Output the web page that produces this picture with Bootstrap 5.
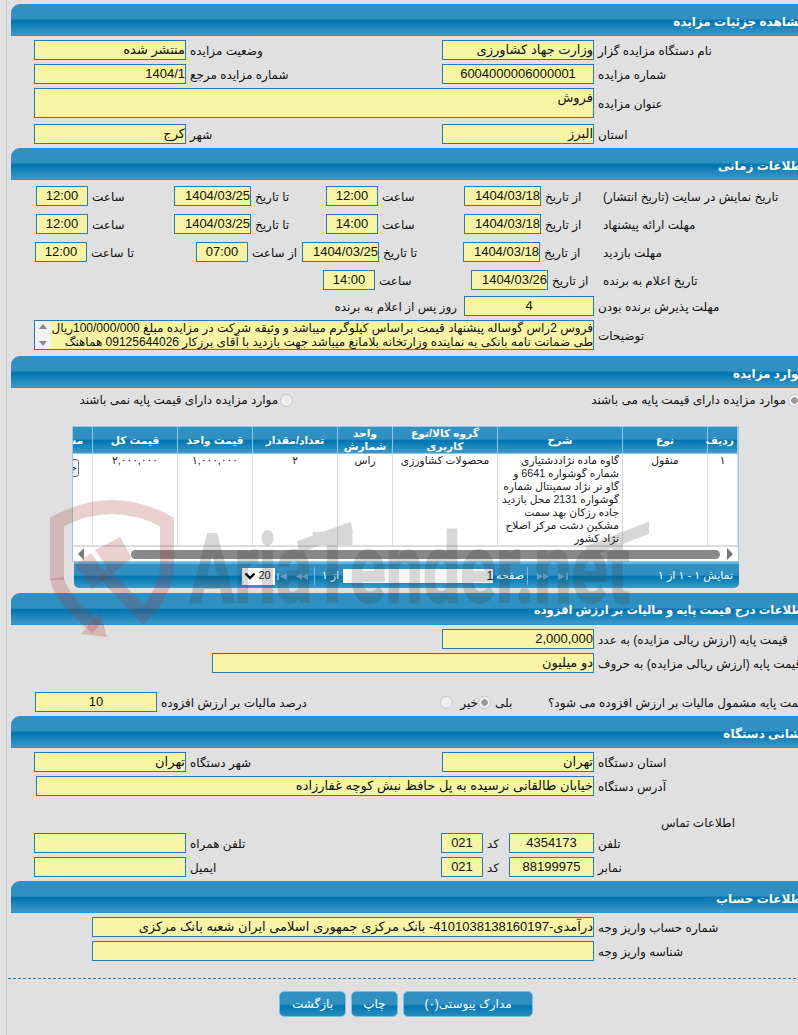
<!DOCTYPE html>
<html lang="fa" dir="rtl">
<head>
<meta charset="utf-8">
<title>مشاهده جزئیات مزایده</title>
<link href="https://cdn.jsdelivr.net/npm/bootstrap@5.3.0/dist/css/bootstrap.min.css" rel="stylesheet">
<style>
html,body{background:#e0e0e0;height:1035px;overflow:hidden}
body{font-family:"Liberation Sans","DejaVu Sans",sans-serif;font-size:12px;line-height:1.2;color:#111;position:relative;width:798px}
.stripe{direction:ltr;border-left:1px solid #cfcfcf;margin-left:6px;height:1035px;padding-left:4px;padding-top:4px}
.sheet{width:800px;direction:rtl}
.shead{height:32px;border-top:1px solid #2a93d5;border-bottom:1px solid #2a93d5;border-top-left-radius:9px;background:linear-gradient(#2f90c1 0,#2f90c1 47%,#0277b2 50%,#0277b2 55%,#3f99c9 100%);color:#fff;font-weight:700;font-size:12px;padding:10px 5px 0 0;white-space:nowrap}
.shlong{font-size:11.5px}
.sbody{display:flex;flex-direction:column;gap:4px}
.pt4{padding-top:4px}.pb4{padding-bottom:4px}
.pt6{padding-top:6px}.pb6{padding-bottom:6px}
.rw{display:flex;align-items:center;height:20px;flex:none}
.rwtall{height:30px}
.cap{flex:none;text-align:left;padding-left:4px;padding-top:3px;white-space:nowrap}
.fld{flex:none;height:20px;background:#f7f4a5;border:1px solid #2a7ab0;line-height:18px;white-space:nowrap;overflow:hidden;text-align:right;font-size:13px}
.fldc{text-align:center}
.fldtall{height:30px}
.mt2{margin-top:2px}
.mt4b{margin-top:4px}
.mt5x{margin-top:5px}
.mt15{margin-top:15px}
.c217{width:217px}.c212{width:212px}.c58{width:58px}.c59{width:59px}.c86{width:86px}.c75{width:75px}.c84{width:84px}.c54{width:54px}.c109{width:109px}.c51{width:51px}.c96{width:96px}.c256{width:256px}.c255{width:255px}.c267{width:267px}.c53{width:53px}.c19{width:19px;padding-left:2px}.c283{width:283px}.c26{width:26px}
.f152{width:152px}.f77{width:77px}.f52{width:52px}.f130{width:130px}.f122{width:122px}.f560{width:560px}.f558{width:558px}.f382{width:382px}.f85{width:85px}.f42{width:42px}.f502{width:502px}
.after{margin-right:7px;padding-top:3px;white-space:nowrap}
.notes{flex:none;width:560px;height:30px;border:1px solid #2a7ab0;background:#f7f4a5;display:flex;overflow:hidden}
.notetext{flex:1;overflow:hidden;white-space:nowrap;font-size:12px;line-height:14px;text-align:right}
.notebar{flex:none;width:16px;background:#f1f1f1;display:flex;flex-direction:column;justify-content:space-between;align-items:center;padding:3px 0}
.uparr{border:4px solid transparent;border-top:0;border-bottom:5px solid #888;width:0;height:0}
.dnarr{border:4px solid transparent;border-bottom:0;border-top:5px solid #888;width:0;height:0}
.rad{appearance:none;flex:none;width:13px;height:13px;border-radius:50%;border:1px solid #c8c8c8;background:#eee;margin:0}
.radon{background:radial-gradient(circle,#9a9a9a 0 3px,#eee 3.5px)}
.radrow{display:flex;align-items:center;height:20px;gap:2px;white-space:nowrap;margin-top:2px}
.rr1{margin-right:10px}
.radsp{margin-right:296px}
.mr6{margin-right:6px}
.gbox{width:667px;margin-right:72px;border:1px solid #9cc9e8;background:#fff;overflow:hidden;margin-top:16px}
.gtbl{table-layout:fixed;width:705px;margin:0;border-collapse:collapse;font-size:10.7px;--bs-table-bg:transparent}
.gtbl th{background:linear-gradient(#2f90c1 0,#2f90c1 47%,#0277b2 50%,#0277b2 55%,#3f99c9 100%);color:#fff;font-weight:700;font-size:10.7px;line-height:13px;text-align:center;padding:0 3px;height:26px;border:1px solid #8cc8ea;border-top:0;vertical-align:middle}
.gtbl td{padding:0 3px;border:1px solid #dcdcdc;border-top:0;text-align:center;vertical-align:top;line-height:13px;height:91px;color:#222;background:#fff}
.gtbl td.dsc{text-align:right;white-space:nowrap;overflow:hidden}
.cw30{width:30px}.cw85{width:85px}.cw125{width:125px}.cw105{width:105px}.cw55{width:55px}.cw75{width:75px}.cw60{width:60px}
.vbtn{display:block;width:34px;height:18px;margin:5px 10px 0 0;padding:0;font-size:10px;line-height:16px;border:1px solid #777;border-radius:3px;background:#f4f4f4;color:#222;text-align:center}
.sbar{height:15px;background:#fff;display:flex;direction:ltr;align-items:center;border-top:1px solid #dcdcdc;padding:0 0 0 5px}
.sleft{flex:none;border:6px solid transparent;border-left:0;border-right:6px solid #777}
.sthumb{flex:none;width:589px;height:9px;background:#888;border-radius:5px;margin-left:47px}
.sright{flex:none;border:6px solid transparent;border-right:0;border-left:6px solid #777;margin-left:7px}
.pgr{width:665px;margin-right:72px;height:26px;border-top:2px solid #5db8e4;border-bottom-left-radius:5px;border-bottom-right-radius:5px;background:linear-gradient(#2f90c1 0,#2f90c1 47%,#0277b2 50%,#0277b2 55%,#3f99c9 100%);color:#fff;font-size:11px;display:flex;align-items:center;padding-right:6px;white-space:nowrap}
.pinfo{flex:none;width:165px}
.picons{flex:none;width:32px;height:9px}
.psep{flex:none;width:1px;height:18px;background:#7fb8d8}
.ptxt{flex:none}
.pinput{flex:none;width:150px;height:14px;background:#fff;color:#111;line-height:14px;font-size:12px;text-align:right;margin:0 3px 0 4px}
.psel{flex:none;width:33px;height:17px;background:#fff;color:#111;direction:ltr;display:flex;align-items:center;justify-content:space-between;padding:0 4px 0 2px;font-size:11px}
.mr2{margin-right:2px}.mr3{margin-right:3px}.mr8{margin-right:8px}.mr7{margin-right:7px}.mr5{margin-right:5px}
.contact{height:20px;flex:none;margin-top:13px;margin-bottom:-4px;padding-right:76px;line-height:20px;white-space:nowrap}
.dashy{border-top:1px dashed #2a7ab0;margin-left:-3px;margin-top:17px}
.btnrow{display:flex;gap:5px;padding-right:278px;margin-top:12px}
.sbtn{flex:none;height:26px;padding:0;color:#fff;font-size:12px;line-height:24px;border:1px solid #6fc4ea;border-radius:5px;background:linear-gradient(#2f90c1 0,#2f90c1 50%,#0277b2 60%,#2a8cbf 100%)}
.b130{width:130px}.b47{width:47px}.b67{width:67px}
.wmark{position:absolute;left:0;top:0;pointer-events:none;z-index:5;direction:ltr}
</style>
</head>
<body>
<div class="stripe">
<div class="sheet">

<div class="shead">مشاهده جزئیات مزایده</div>
<div class="sbody pt4 pb4">
  <div class="rw"><div class="cap c217">نام دستگاه مزایده گزار</div><div class="fld f152">وزارت جهاد کشاورزی</div><div class="cap c256">وضعیت مزایده</div><div class="fld f152">منتشر شده</div></div>
  <div class="rw"><div class="cap c217">شماره مزایده</div><div class="fld f152 fldc">6004000006000001</div><div class="cap c256">شماره مزایده مرجع</div><div class="fld f152">1404/1</div></div>
  <div class="rw rwtall"><div class="cap c217">عنوان مزایده</div><div class="fld fldtall f560">فروش</div></div>
  <div class="rw mt2"><div class="cap c217">استان</div><div class="fld f152">البرز</div><div class="cap c256">شهر</div><div class="fld f152">کرج</div></div>
</div>

<div class="shead">اطلاعات زمانی</div>
<div class="sbody pt6 pb6">
  <div class="rw"><div class="cap c212">تاریخ نمایش در سایت (تاریخ انتشار)</div><div class="cap c58">از تاریخ</div><div class="fld f77">1404/03/18</div><div class="cap c86">ساعت</div><div class="fld f52 fldc">12:00</div><div class="cap c75">تا تاریخ</div><div class="fld f77">1404/03/25</div><div class="cap c86">ساعت</div><div class="fld f52 fldc">12:00</div></div>
  <div class="rw mt4b"><div class="cap c212">مهلت ارائه پیشنهاد</div><div class="cap c58">از تاریخ</div><div class="fld f77">1404/03/18</div><div class="cap c86">ساعت</div><div class="fld f52 fldc">14:00</div><div class="cap c75">تا تاریخ</div><div class="fld f77">1404/03/25</div><div class="cap c86">ساعت</div><div class="fld f52 fldc">12:00</div></div>
  <div class="rw mt4b"><div class="cap c212">مهلت بازدید</div><div class="cap c59">از تاریخ</div><div class="fld f77">1404/03/18</div><div class="cap c84">تا تاریخ</div><div class="fld f77">1404/03/25</div><div class="cap c54">از ساعت</div><div class="fld f52 fldc">07:00</div><div class="cap c109">تا ساعت</div><div class="fld f52 fldc">12:00</div></div>
  <div class="rw mt4b"><div class="cap c212">تاریخ اعلام به برنده</div><div class="cap c51">از تاریخ</div><div class="fld f77">1404/03/26</div><div class="cap c96">ساعت</div><div class="fld f52 fldc">14:00</div></div>
  <div class="rw mt2"><div class="cap c217">مهلت پذیرش برنده بودن</div><div class="fld f130 fldc">4</div><div class="after">روز پس از اعلام به برنده</div></div>
  <div class="rw rwtall"><div class="cap c217">توضیحات</div><div class="notes"><div class="notetext">فروس 2راس گوساله پیشنهاد قیمت براساس کیلوگرم میباشد و وثیقه شرکت در مزایده مبلغ 100/000/000ریال<br>طی ضمانت نامه بانکی به نماینده وزارتخانه بلامانع میباشد جهت بازدید با آقای برزکار 09125644026 هماهنگ</div><div class="notebar"><span class="uparr"></span><span class="dnarr"></span></div></div></div>
</div>

<div class="shead">موارد مزایده</div>
<div class="radrow">
  <input type="radio" class="rad radon rr1" disabled aria-label="پایه"><span>موارد مزایده دارای قیمت پایه می باشند</span>
  <input type="radio" class="rad radsp" disabled aria-label="بدون پایه"><span>موارد مزایده دارای قیمت پایه نمی باشند</span>
</div>
<div class="gbox">
  <table class="gtbl">
    <colgroup><col class="cw30"><col class="cw85"><col class="cw125"><col class="cw105"><col class="cw55"><col class="cw85"><col class="cw75"><col class="cw85"><col class="cw60"></colgroup>
    <thead><tr><th>ردیف</th><th>نوع</th><th>شرح</th><th>گروه کالا/نوع کاربری</th><th>واحد شمارش</th><th>تعداد/مقدار</th><th>قیمت واحد</th><th>قیمت کل</th><th>مشاهده</th></tr></thead>
    <tbody><tr><td>۱</td><td>منقول</td><td class="dsc">گاوه ماده نژاددشتیاری<br>شماره گوشواره 6641 و<br>گاو نر نژاد سمینتال شماره<br>گوشواره 2131 محل بازدید<br>جاده رزکان بهد سمت<br>مشکین دشت مرکز اصلاح<br>نژاد کشور</td><td>محصولات کشاورزی</td><td>راس</td><td>۲</td><td>۱,۰۰۰,۰۰۰</td><td>۲,۰۰۰,۰۰۰</td><td><button type="button" class="vbtn">جزئیات</button></td></tr></tbody>
  </table>
  <div class="sbar"><span class="sleft"></span><span class="sthumb"></span><span class="sright"></span></div>
</div>
<div class="pgr">
  <span class="pinfo">نمایش ۱ - ۱ از ۱</span>
  <svg class="picons" viewBox="0 0 32 9" aria-hidden="true"><path fill="#6db4da" d="M0 1h2v7H0zM3 4.500 10 1v7zM19 4.500 25 1v7zM25 4.500 31 1v7z" transform="matrix(-1 0 0 1 32 0)"/></svg>
  <span class="psep mr8"></span>
  <span class="ptxt mr3">صفحه</span>
  <span class="pinput">1</span>
  <span class="ptxt">از ۱</span>
  <span class="psep mr7"></span>
  <svg class="picons mr5" viewBox="0 0 32 9" aria-hidden="true"><path fill="#6db4da" d="M0 1h2v7H0zM3 4.500 10 1v7zM19 4.500 25 1v7zM25 4.500 31 1v7z"/></svg>
  <div class="psel mr2"><svg width="12" height="8" viewBox="0 0 12 8" aria-hidden="true"><path d="M1.500 1.500 6 6l4.500-4.500" fill="none" stroke="#000" stroke-width="2.400"/></svg><span>20</span></div>
</div>

<div class="shead shlong mt5x">اطلاعات درج قیمت پایه و مالیات بر ارزش افزوده</div>
<div class="sbody pt4 pb4">
  <div class="rw"><div class="cap c217">قیمت پایه (ارزش ریالی مزایده) به عدد</div><div class="fld f152">2,000,000</div></div>
  <div class="rw"><div class="cap c217">قیمت پایه (ارزش ریالی مزایده) به حروف</div><div class="fld f382">دو میلیون</div></div>
  <div class="rw mt15"><div class="cap c267">قیمت پایه مشمول مالیات بر ارزش افزوده می شود؟</div><div class="cap c53">بلی</div><input type="radio" class="rad radon" disabled aria-label="بلی"><div class="cap c19">خیر</div><input type="radio" class="rad mr6" disabled aria-label="خیر"><div class="cap c283">درصد مالیات بر ارزش افزوده</div><div class="fld f122 fldc">10</div></div>
</div>

<div class="shead">نشانی دستگاه</div>
<div class="sbody pt4 pb4">
  <div class="rw"><div class="cap c217">استان دستگاه</div><div class="fld f152">تهران</div><div class="cap c256">شهر دستگاه</div><div class="fld f152">تهران</div></div>
  <div class="rw"><div class="cap c217">آدرس دستگاه</div><div class="fld f558">خیابان طالقانی نرسیده به پل حافظ نبش کوچه غفارزاده</div></div>
  <div class="contact">اطلاعات تماس</div>
  <div class="rw"><div class="cap c217">تلفن</div><div class="fld f85 fldc">4354173</div><div class="cap c26">کد</div><div class="fld f42 fldc">021</div><div class="cap c255">تلفن همراه</div><div class="fld f152"></div></div>
  <div class="rw"><div class="cap c217">نمابر</div><div class="fld f85 fldc">88199975</div><div class="cap c26">کد</div><div class="fld f42 fldc">021</div><div class="cap c255">ایمیل</div><div class="fld f152"></div></div>
</div>

<div class="shead">اطلاعات حساب</div>
<div class="sbody pt4">
  <div class="rw"><div class="cap c217">شماره حساب واریز وجه</div><div class="fld f502">درآمدی-4101038138160197- بانک مرکزی جمهوری اسلامی ایران شعبه بانک مرکزی</div></div>
  <div class="rw"><div class="cap c217">شناسه واریز وجه</div><div class="fld f502"></div></div>
</div>
<div class="dashy"></div>
<div class="btnrow">
  <button type="button" class="btn sbtn b130">مدارک پیوستی(۰)</button>
  <button type="button" class="btn sbtn b47">چاپ</button>
  <button type="button" class="btn sbtn b67">بازگشت</button>
</div>

</div>
</div>

<svg class="wmark" width="798" height="1035" viewBox="0 0 798 1035" aria-hidden="true">
  <g fill="none" stroke="#a83232" stroke-opacity=".23" stroke-width="14">
    <path d="M57 580V522Q112 492 167 522V570Q163 595 143 615L103 572"/>
    <path d="M57 578Q60 598 97 628"/>
  </g>
  <path fill="#a83232" fill-opacity=".23" d="M107 637 81 634 100 612zM75 565 92 589 108 577 91 553zM95 550 112 574 132 558 120 537z"/>
  <g fill="#3c3c3c" stroke="#3c3c3c" stroke-width="2" opacity=".2">
    <text x="190" y="602" font-family="Roboto,sans-serif" font-weight="700" font-size="96" textLength="440" lengthAdjust="spacingAndGlyphs">AriaTender.net</text>
    <path d="M298 542 350 523 352 532 300 552zM587 547 648 523 648 533 589 556z"/>
  </g>
</svg>
<script src="https://cdn.jsdelivr.net/npm/bootstrap@5.3.0/dist/js/bootstrap.bundle.min.js"></script>
</body>
</html>
